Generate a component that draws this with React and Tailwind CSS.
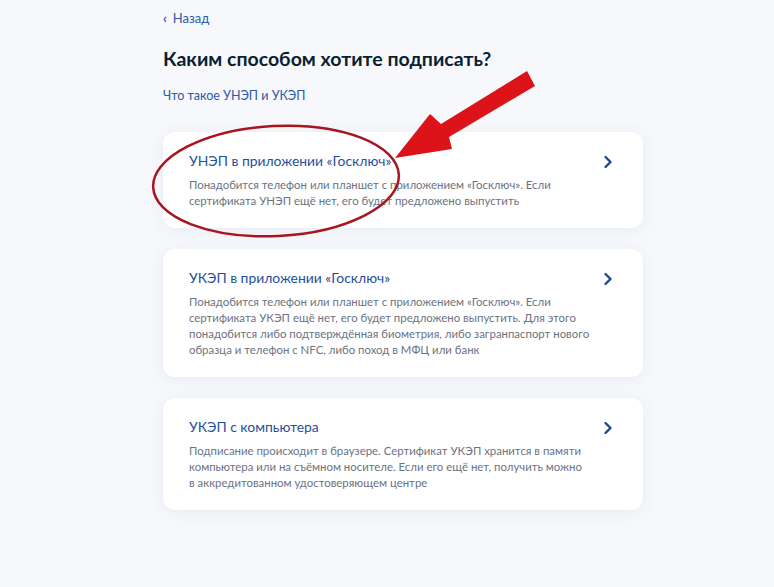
import React from 'react';

const options = [
  {
    title: 'УНЭП в приложении «Госключ»',
    text: [
      'Понадобится телефон или планшет с приложением «Госключ». Если',
      'сертификата УНЭП ещё нет, его будет предложено выпустить',
    ],
  },
  {
    title: 'УКЭП в приложении «Госключ»',
    text: [
      'Понадобится телефон или планшет с приложением «Госключ». Если',
      'сертификата УКЭП ещё нет, его будет предложено выпустить. Для этого',
      'понадобится либо подтверждённая биометрия, либо загранпаспорт нового',
      'образца и телефон с NFC, либо поход в МФЦ или банк',
    ],
  },
  {
    title: 'УКЭП с компьютера',
    text: [
      'Подписание происходит в браузере. Сертификат УКЭП хранится в памяти',
      'компьютера или на съёмном носителе. Если его ещё нет, получить можно',
      'в аккредитованном удостоверяющем центре',
    ],
  },
];

const Chevron = () => (
  <svg width="10" height="14" viewBox="0 0 10 14" className="mt-[3px] shrink-0">
    <path d="M2.5 2 L7.5 7 L2.5 12" fill="none" stroke="#1d4a8f" strokeWidth="2.4" strokeLinecap="round" strokeLinejoin="round" />
  </svg>
);

const OptionCard = ({ title, text }) => (
  <div className="flex items-start justify-between rounded-xl bg-white pl-[26px] pr-[30px] pt-[20px] pb-[19px] shadow-[0_2px_14px_rgba(120,140,180,0.12)]">
    <div>
      <div className="text-[13.9px] leading-[18px] text-[#1f4f9c]">{title}</div>
      <div className="mt-[7px] whitespace-nowrap text-[11.4px] leading-[16px] text-[#6b7380]">
        {text.map((line) => (
          <div key={line}>{line}</div>
        ))}
      </div>
    </div>
    <Chevron />
  </div>
);

export default function App() {
  return (
    <div className="relative min-h-[587px] w-[774px] overflow-hidden bg-[#f6f8fb] font-['Lato','Noto_Sans',sans-serif]">
      <div className="ml-[163px] w-[480px] pt-[9px]">
        <div className="flex items-center gap-[6px] text-[13px] leading-[18px] text-[#2a5aa5]">
          <span className="text-[13px] font-bold">‹</span>
          <span>Назад</span>
        </div>
        <h1 className="mt-[19px] text-[19.5px] font-bold leading-[26px] text-[#0b1f33]">
          Каким способом хотите подписать?
        </h1>
        <div className="mt-[15px] text-[12.5px] leading-[18px] text-[#2a5aa5]">Что такое УНЭП и УКЭП</div>
        <div className="mt-[27px] flex flex-col gap-[21px]">
          {options.map((o) => (
            <OptionCard key={o.title} {...o} />
          ))}
        </div>
      </div>

      <svg className="pointer-events-none absolute left-0 top-0" width="774" height="587">
        <ellipse cx="276" cy="181" rx="123" ry="55" fill="none" stroke="#a8141f" strokeWidth="2.5" transform="rotate(-3 276 181)" />
        <polygon
          points="395,158 430,114 441,124 527,71 535,86 449,137 452,149"
          fill="#dc1419"
        />
      </svg>
    </div>
  );
}
